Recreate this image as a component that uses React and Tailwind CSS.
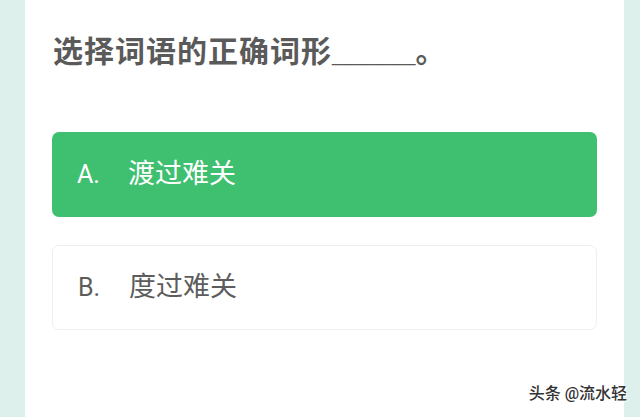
import React from 'react';

const options = [
  { key: 'A', text: '渡过难关', active: true },
  { key: 'B', text: '度过难关', active: false },
];

const cjk = { fontFamily: "Roboto, 'Noto Sans CJK SC', sans-serif" };

export default function App() {
  return (
    <div className="relative flex h-[417px] w-[640px] overflow-hidden bg-[#ddf0ec]" style={cjk}>
      <div className="ml-[25px] flex w-[599px] flex-col bg-white px-[27px] pt-[37px]">
        <h1 className="pl-[1px] text-[30px] font-bold leading-[30px] tracking-[1px] text-[#5a5a5a]">
          选择词语的正确词形<span className="font-['Liberation_Sans'] tracking-normal">_____</span>。
        </h1>
        <div className="mt-[65px] flex flex-col gap-[28px]">
          {options.map((o) => (
            <div
              key={o.key}
              className={`flex h-[85px] items-center rounded-[7px] px-[25px] text-[27px] ${
                o.active
                  ? 'bg-[#3fbf70] text-white'
                  : 'border border-[#eeeeee] bg-white text-[#5c5c5c]'
              }`}
            >
              <span className="w-[51px] text-[25px]">{o.key}.</span>
              <span>{o.text}</span>
            </div>
          ))}
        </div>
      </div>
      <div className="absolute bottom-[11px] right-[13px] text-[16px] font-medium text-[#333] [text-shadow:1px_1px_0_#fff,-1px_-1px_0_#fff]">
        头条 @流水轻
      </div>
    </div>
  );
}
